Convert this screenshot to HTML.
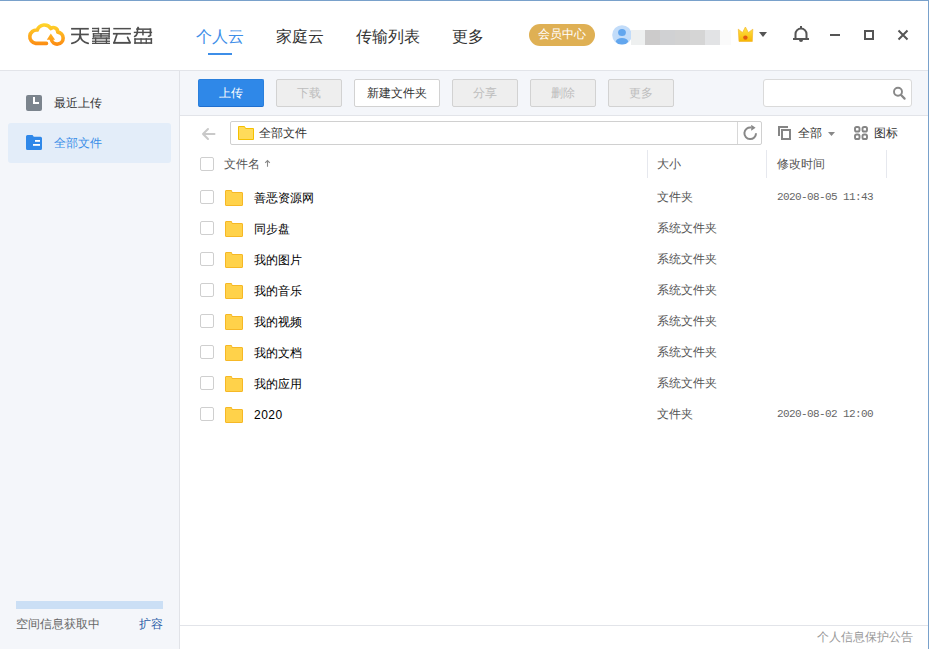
<!DOCTYPE html>
<html><head><meta charset="utf-8">
<style>
*{margin:0;padding:0;box-sizing:border-box}
html,body{width:929px;height:649px;overflow:hidden;background:#fff}
body{position:relative;font-family:"Liberation Sans",sans-serif;font-size:12px;color:#333}
.a{position:absolute}
.t{position:absolute;white-space:nowrap;line-height:1}
.btn{position:absolute;top:79px;height:28px;border:1px solid #d2d2d2;border-radius:2px;background:#eeeeee;color:#bdbdbd;font-size:12px;text-align:center;line-height:26px}
.cb{position:absolute;left:200px;width:14px;height:14px;border:1px solid #cfcfcf;border-radius:2px;background:#fff}
.fd{position:absolute;left:225px;width:18px;height:16px}
.nm{position:absolute;left:254px;font-size:12px;color:#000;line-height:1;white-space:nowrap}
.sz{position:absolute;left:657px;font-size:12px;color:#555;line-height:1;white-space:nowrap}
.dt{position:absolute;left:777px;font-family:"Liberation Mono",monospace;font-size:11px;letter-spacing:-0.6px;color:#666;line-height:1;white-space:nowrap}
</style></head><body>
<!-- window borders -->
<div class="a" style="left:0;top:0;width:929px;height:1px;background:#79a1cb"></div>
<div class="a" style="left:928px;top:0;width:1px;height:649px;background:#79a1cb"></div>
<!-- header line -->
<div class="a" style="left:0;top:70px;width:928px;height:1px;background:#e2e4e9"></div>
<!-- sidebar -->
<div class="a" style="left:0;top:71px;width:179px;height:578px;background:#f4f6fa"></div>
<div class="a" style="left:179px;top:71px;width:1px;height:578px;background:#e1e3e8"></div>
<!-- toolbar -->
<div class="a" style="left:180px;top:71px;width:748px;height:44px;background:#f4f6fa"></div>
<div class="a" style="left:180px;top:115px;width:748px;height:1px;background:#e2e4e9"></div>
<!-- footer line -->
<div class="a" style="left:180px;top:625px;width:748px;height:1px;background:#e2e4e9"></div>

<!-- LOGO -->
<svg class="a" style="left:20px;top:15px" width="60" height="40" viewBox="20 15 60 40">
<defs><linearGradient id="lg" x1="0" y1="23" x2="0" y2="46" gradientUnits="userSpaceOnUse">
<stop offset="0" stop-color="#ffd92c"/><stop offset="1" stop-color="#fc8812"/></linearGradient></defs>
<path d="M46.5,43.4 L35.8,43.4 A6.7 6.7 0 1 1 37.25,30.05 A7.65 7.65 0 0 1 50.9,28.5 A4.2 4.2 0 0 1 57.7,32.1 A6 6 0 1 1 51.3,39.4" fill="none" stroke="url(#lg)" stroke-width="3.6" stroke-linecap="round" stroke-linejoin="round"/>
<path d="M46.8,39.7 L50.8,33.6 L55.1,39.7 Z" fill="url(#lg)"/>
</svg>
<svg class="a" style="left:68px;top:24px" width="88" height="23" viewBox="68 24 88 23">
<g fill="#4f4f4f">
<rect x="71.1" y="27.9" width="17.7" height="1.7"/>
<rect x="71.1" y="33.6" width="17.7" height="1.7"/>
<rect x="79.4" y="28" width="1.6" height="7.8"/>
</g>
<g fill="none" stroke="#4f4f4f" stroke-width="1.7" stroke-linecap="round">
<path d="M80.1,35.5 Q79.6,41.8 71.8,43.3"/>
<path d="M80.3,35.5 Q80.8,41.8 88.2,43.3"/>
</g>
<g fill="#4f4f4f">
<rect x="92" y="27.8" width="7.1" height="1.4"/>
<rect x="92" y="30.5" width="7.1" height="1.4"/>
<rect x="97.8" y="27.8" width="1.3" height="5"/>
<rect x="101.7" y="27.8" width="8.2" height="1.4"/>
<rect x="101.7" y="30.5" width="8.2" height="1.4"/>
<rect x="108.6" y="27.8" width="1.3" height="5"/>
<rect x="92.8" y="33.1" width="17" height="1.2"/>
<rect x="92.8" y="36.4" width="17" height="1.2"/>
<rect x="93.8" y="34.8" width="15" height="1"/>
<rect x="92.8" y="33.1" width="1.4" height="4.5"/>
<rect x="100.3" y="33.1" width="1.4" height="4.5"/>
<rect x="108.4" y="33.1" width="1.4" height="4.5"/>
<rect x="92" y="38.1" width="18" height="1.2"/>
<rect x="92" y="40.6" width="18" height="1.3"/>
<rect x="92" y="42.7" width="18" height="1.3"/>
<rect x="95" y="37.5" width="1.3" height="5.5"/>
<rect x="105.8" y="37.5" width="1.3" height="5.5"/>
</g>
<g fill="#4f4f4f">
<rect x="113.3" y="27.9" width="17.6" height="1.5"/>
<rect x="112.9" y="32.9" width="18" height="1.7"/>
<rect x="113.1" y="41.9" width="17.5" height="1.9"/>
</g>
<g fill="none" stroke="#4f4f4f" stroke-width="1.7" stroke-linecap="round">
<path d="M116.9,34.6 L114.2,42.6"/>
<path d="M127.6,37.3 L130,42.4"/>
</g>
<g fill="#4f4f4f">
<rect x="136.2" y="28.4" width="14.4" height="1.5"/>
<rect x="133.8" y="31.7" width="18.3" height="1.4"/>
<rect x="149.6" y="28.4" width="1.7" height="7.6"/>
<rect x="142.2" y="29.9" width="1.5" height="5.5"/>
<rect x="134.3" y="38.3" width="17.8" height="1.5"/>
<rect x="134.3" y="42.2" width="17.8" height="1.6"/>
<rect x="134.3" y="38.3" width="1.5" height="5.5"/>
<rect x="140.4" y="38.3" width="1.3" height="5.5"/>
<rect x="145.6" y="38.3" width="1.3" height="5.5"/>
<rect x="150.6" y="38.3" width="1.5" height="5.5"/>
</g>
<g fill="none" stroke="#4f4f4f" stroke-width="1.6" stroke-linecap="round">
<path d="M137.6,28.2 L137.3,33 Q136.8,35.5 134.6,36.5"/>
<path d="M138,27.4 L138.6,28.4"/>
<path d="M150.4,35.5 Q149.8,36.3 148.5,36.3"/>
</g>
</svg>

<!-- NAV -->
<div class="t" style="left:196px;top:29px;font-size:16px;color:#3d8ee8">个人云</div>
<div class="a" style="left:208px;top:53px;width:24px;height:2px;background:#3d8ee8"></div>
<div class="t" style="left:276px;top:29px;font-size:16px;color:#333">家庭云</div>
<div class="t" style="left:356px;top:29px;font-size:16px;color:#333">传输列表</div>
<div class="t" style="left:452px;top:29px;font-size:16px;color:#333">更多</div>

<!-- VIP -->
<div class="a" style="left:529px;top:24px;width:66px;height:22px;border-radius:11px;background:#dfb054;color:#fff;font-size:12px;line-height:21px;text-align:center">会员中心</div>

<!-- avatar -->
<svg class="a" style="left:612px;top:25px" width="20" height="20" viewBox="0 0 20 20">
<defs><clipPath id="avc"><circle cx="10" cy="10" r="9.8"/></clipPath></defs>
<circle cx="10" cy="10" r="9.8" fill="#c2dcf9"/>
<ellipse cx="10" cy="7.5" rx="3.9" ry="3.5" fill="#62a6ee"/>
<ellipse cx="10" cy="16.3" rx="6" ry="3.3" fill="#62a6ee" clip-path="url(#avc)"/>
</svg>
<div class="a" style="left:631px;top:30px;width:100px;height:15px;display:flex">
<div style="width:14px;background:#eef0f0"></div>
<div style="width:15px;background:#cccbcb"></div>
<div style="width:15px;background:#d0d1d3"></div>
<div style="width:15px;background:#d2d2d2"></div>
<div style="width:15px;background:#d5d5d5"></div>
<div style="width:15px;background:#e2e3e5"></div>
<div style="width:11px;background:#fafafa"></div>
</div>

<!-- crown -->
<svg class="a" style="left:736px;top:26px" width="20" height="18" viewBox="736 26 20 18">
<defs><linearGradient id="cg" x1="0" y1="27" x2="0" y2="42" gradientUnits="userSpaceOnUse">
<stop offset="0" stop-color="#ffe54a"/><stop offset="1" stop-color="#f7b500"/></linearGradient></defs>
<path d="M738.3,29.2 L742.5,32.6 L745.4,27 L748.4,32.6 L752.8,29.2 L752.3,41.5 L739,41.5 Z" fill="url(#cg)" stroke="#f5b830" stroke-width="0.7" stroke-linejoin="round"/>
<circle cx="745.4" cy="37.6" r="2.2" fill="#e25a12"/>
</svg>
<svg class="a" style="left:758px;top:30px" width="10" height="8" viewBox="758 30 10 8">
<path d="M759,32 L767,32 L763,37 Z" fill="#555"/>
</svg>

<!-- bell -->
<svg class="a" style="left:790px;top:24px" width="22" height="20" viewBox="790 24 22 20">
<path d="M801,26 L801,28.5" stroke="#555" stroke-width="2"/>
<path d="M795.5,39 L795.5,34 A5.5 5.5 0 0 1 806.5,34 L806.5,39" fill="none" stroke="#555" stroke-width="2"/>
<path d="M793,39 L809,39" stroke="#555" stroke-width="2"/>
<path d="M799,40 A2 2 0 0 0 803,40 Z" fill="#555"/>
</svg>

<!-- window controls -->
<div class="a" style="left:830px;top:34px;width:10px;height:2px;background:#555"></div>
<div class="a" style="left:864px;top:30px;width:10px;height:10px;border:2px solid #555"></div>
<svg class="a" style="left:896px;top:28px" width="14" height="14" viewBox="896 28 14 14">
<path d="M898.5,30.5 L907.5,39.5 M907.5,30.5 L898.5,39.5" stroke="#555" stroke-width="2"/>
</svg>

<!-- SIDEBAR items -->
<div class="a" style="left:26px;top:95px;width:16px;height:16px;border-radius:2px;background:#7b848d"></div>
<div class="a" style="left:33px;top:97px;width:2px;height:7px;background:#fff"></div>
<div class="a" style="left:33px;top:102px;width:6px;height:2px;background:#fff"></div>
<div class="t" style="left:54px;top:97px;font-size:12px;color:#333">最近上传</div>

<div class="a" style="left:8px;top:123px;width:163px;height:40px;border-radius:3px;background:#e3edf9"></div>
<svg class="a" style="left:26px;top:134px" width="16" height="17" viewBox="26 134 16 17">
<path d="M27.5,135 L32.5,135 L33.8,136.8 L40.5,136.8 Q42,136.8 42,138.3 L42,148.5 Q42,150 40.5,150 L27.5,150 Q26,150 26,148.5 L26,136.5 Q26,135 27.5,135 Z" fill="#2f88e9"/>
<rect x="35" y="140" width="5" height="1.8" fill="#fff"/>
<rect x="33" y="144" width="7" height="1.8" fill="#fff"/>
</svg>
<div class="t" style="left:54px;top:137px;font-size:12px;color:#3a8ee8">全部文件</div>

<!-- sidebar footer -->
<div class="a" style="left:16px;top:601px;width:147px;height:8px;background:#cbdff5"></div>
<div class="t" style="left:16px;top:618px;font-size:12px;color:#666">空间信息获取中</div>
<div class="t" style="left:139px;top:618px;font-size:12px;color:#2d5ea8">扩容</div>

<!-- TOOLBAR buttons -->
<div class="btn" style="left:198px;width:66px;background:#2f88e8;border-color:#2a7fdc;border-bottom-color:#1f6fcf;color:#fff">上传</div>
<div class="btn" style="left:276px;width:66px">下载</div>
<div class="btn" style="left:354px;width:86px;background:#fff;color:#333">新建文件夹</div>
<div class="btn" style="left:452px;width:66px">分享</div>
<div class="btn" style="left:530px;width:66px">删除</div>
<div class="btn" style="left:608px;width:66px">更多</div>
<!-- search -->
<div class="a" style="left:763px;top:79px;width:149px;height:28px;border:1px solid #dadada;border-radius:3px;background:#fff"></div>
<svg class="a" style="left:890px;top:86px" width="18" height="16" viewBox="890 86 18 16">
<circle cx="898" cy="91.8" r="4" fill="none" stroke="#888" stroke-width="1.9"/>
<path d="M900.8,94.8 L904.6,98.6" stroke="#888" stroke-width="2.2" stroke-linecap="round"/>
</svg>

<!-- address row -->
<svg class="a" style="left:200px;top:126px" width="18" height="16" viewBox="200 126 18 16">
<path d="M214.5,134 L203,134 M208,129 L203,134 L208,139" fill="none" stroke="#c9c9c9" stroke-width="2" stroke-linecap="round" stroke-linejoin="round"/>
</svg>
<div class="a" style="left:230px;top:121px;width:532px;height:24px;border:1px solid #d0d0d0;border-radius:2px;background:#fff"></div>
<div class="a" style="left:737px;top:122px;width:1px;height:22px;background:#d8d8d8"></div>
<svg class="a" style="left:238px;top:125px" width="17" height="16" viewBox="238 125 17 16">
<path d="M238.5,126.5 L244.5,126.5 L245.5,128.5 L253.5,128.5 L253.5,139.5 L238.5,139.5 Z" fill="#ffdb5a" stroke="#f5c000" stroke-width="1"/>
</svg>
<div class="t" style="left:259px;top:127px;font-size:12px;color:#333">全部文件</div>
<svg class="a" style="left:742px;top:125px" width="17" height="17" viewBox="742 125 17 17">
<path d="M756,133.2 A5.8 5.8 0 1 1 751,127.5" fill="none" stroke="#888" stroke-width="2"/>
<path d="M751.2,124.8 L755.6,127.8 L751.2,130.8 Z" fill="#888"/>
</svg>
<svg class="a" style="left:777px;top:125px" width="16" height="16" viewBox="777 125 16 16">
<path d="M779,136 L779,127 L788,127" fill="none" stroke="#858585" stroke-width="2"/>
<rect x="782" y="130" width="8" height="9" fill="none" stroke="#858585" stroke-width="2"/>
</svg>
<div class="t" style="left:798px;top:127px;font-size:12px;color:#333">全部</div>
<svg class="a" style="left:826px;top:130px" width="10" height="8" viewBox="826 130 10 8">
<path d="M828,132 L835,132 L831.5,136 Z" fill="#888"/>
</svg>
<svg class="a" style="left:853px;top:125px" width="16" height="16" viewBox="853 125 16 16">
<rect x="855" y="127" width="4.5" height="4.5" rx="1.6" fill="none" stroke="#858585" stroke-width="1.9"/>
<rect x="862.5" y="127" width="4.5" height="4.5" rx="1.6" fill="none" stroke="#858585" stroke-width="1.9"/>
<rect x="855" y="134.5" width="4.5" height="4.5" rx="1.6" fill="none" stroke="#858585" stroke-width="1.9"/>
<rect x="862.5" y="134.5" width="4.5" height="4.5" rx="1.6" fill="none" stroke="#858585" stroke-width="1.9"/>
</svg>
<div class="t" style="left:874px;top:127px;font-size:12px;color:#333">图标</div>

<!-- column header -->
<div class="cb" style="top:157px"></div>
<div class="t" style="left:224px;top:158px;font-size:12px;color:#555">文件名</div>
<svg class="a" style="left:263px;top:158px" width="9" height="10" viewBox="263 158 9 10"><path d="M267.5,160.5 L267.5,166.8 M265.2,162.8 L267.5,160.5 L269.8,162.8" fill="none" stroke="#888" stroke-width="1.1"/></svg>
<div class="a" style="left:647px;top:150px;width:1px;height:28px;background:#e6e8ee"></div>
<div class="t" style="left:657px;top:158px;font-size:12px;color:#555">大小</div>
<div class="a" style="left:766px;top:150px;width:1px;height:28px;background:#e6e8ee"></div>
<div class="t" style="left:777px;top:158px;font-size:12px;color:#555">修改时间</div>
<div class="a" style="left:886px;top:150px;width:1px;height:28px;background:#e6e8ee"></div>

<!-- rows -->
<div class="cb" style="top:190px"></div>
<svg class="fd" style="top:190px" viewBox="0 0 18 16"><path d="M0.5,1 Q0.5,0.5 1,0.5 L6.5,0.5 L7,2.5 L17,2.5 Q17.5,2.5 17.5,3 L17.5,15 Q17.5,15.5 17,15.5 L1,15.5 Q0.5,15.5 0.5,15 Z" fill="#ffd24a" stroke="#f6b826" stroke-width="1"/></svg>
<div class="nm" style="top:192px">善恶资源网</div>
<div class="sz" style="top:191px">文件夹</div>
<div class="dt" style="top:192px">2020-08-05 11:43</div>
<div class="cb" style="top:221px"></div>
<svg class="fd" style="top:221px" viewBox="0 0 18 16"><path d="M0.5,1 Q0.5,0.5 1,0.5 L6.5,0.5 L7,2.5 L17,2.5 Q17.5,2.5 17.5,3 L17.5,15 Q17.5,15.5 17,15.5 L1,15.5 Q0.5,15.5 0.5,15 Z" fill="#ffd24a" stroke="#f6b826" stroke-width="1"/></svg>
<div class="nm" style="top:223px">同步盘</div>
<div class="sz" style="top:222px">系统文件夹</div>
<div class="cb" style="top:252px"></div>
<svg class="fd" style="top:252px" viewBox="0 0 18 16"><path d="M0.5,1 Q0.5,0.5 1,0.5 L6.5,0.5 L7,2.5 L17,2.5 Q17.5,2.5 17.5,3 L17.5,15 Q17.5,15.5 17,15.5 L1,15.5 Q0.5,15.5 0.5,15 Z" fill="#ffd24a" stroke="#f6b826" stroke-width="1"/></svg>
<div class="nm" style="top:254px">我的图片</div>
<div class="sz" style="top:253px">系统文件夹</div>
<div class="cb" style="top:283px"></div>
<svg class="fd" style="top:283px" viewBox="0 0 18 16"><path d="M0.5,1 Q0.5,0.5 1,0.5 L6.5,0.5 L7,2.5 L17,2.5 Q17.5,2.5 17.5,3 L17.5,15 Q17.5,15.5 17,15.5 L1,15.5 Q0.5,15.5 0.5,15 Z" fill="#ffd24a" stroke="#f6b826" stroke-width="1"/></svg>
<div class="nm" style="top:285px">我的音乐</div>
<div class="sz" style="top:284px">系统文件夹</div>
<div class="cb" style="top:314px"></div>
<svg class="fd" style="top:314px" viewBox="0 0 18 16"><path d="M0.5,1 Q0.5,0.5 1,0.5 L6.5,0.5 L7,2.5 L17,2.5 Q17.5,2.5 17.5,3 L17.5,15 Q17.5,15.5 17,15.5 L1,15.5 Q0.5,15.5 0.5,15 Z" fill="#ffd24a" stroke="#f6b826" stroke-width="1"/></svg>
<div class="nm" style="top:316px">我的视频</div>
<div class="sz" style="top:315px">系统文件夹</div>
<div class="cb" style="top:345px"></div>
<svg class="fd" style="top:345px" viewBox="0 0 18 16"><path d="M0.5,1 Q0.5,0.5 1,0.5 L6.5,0.5 L7,2.5 L17,2.5 Q17.5,2.5 17.5,3 L17.5,15 Q17.5,15.5 17,15.5 L1,15.5 Q0.5,15.5 0.5,15 Z" fill="#ffd24a" stroke="#f6b826" stroke-width="1"/></svg>
<div class="nm" style="top:347px">我的文档</div>
<div class="sz" style="top:346px">系统文件夹</div>
<div class="cb" style="top:376px"></div>
<svg class="fd" style="top:376px" viewBox="0 0 18 16"><path d="M0.5,1 Q0.5,0.5 1,0.5 L6.5,0.5 L7,2.5 L17,2.5 Q17.5,2.5 17.5,3 L17.5,15 Q17.5,15.5 17,15.5 L1,15.5 Q0.5,15.5 0.5,15 Z" fill="#ffd24a" stroke="#f6b826" stroke-width="1"/></svg>
<div class="nm" style="top:378px">我的应用</div>
<div class="sz" style="top:377px">系统文件夹</div>
<div class="cb" style="top:407px"></div>
<svg class="fd" style="top:407px" viewBox="0 0 18 16"><path d="M0.5,1 Q0.5,0.5 1,0.5 L6.5,0.5 L7,2.5 L17,2.5 Q17.5,2.5 17.5,3 L17.5,15 Q17.5,15.5 17,15.5 L1,15.5 Q0.5,15.5 0.5,15 Z" fill="#ffd24a" stroke="#f6b826" stroke-width="1"/></svg>
<div class="nm" style="top:409px;letter-spacing:0.5px">2020</div>
<div class="sz" style="top:408px">文件夹</div>
<div class="dt" style="top:409px">2020-08-02 12:00</div>

<!-- footer right -->
<div class="t" style="left:817px;top:631px;font-size:12px;color:#999">个人信息保护公告</div>
</body></html>
